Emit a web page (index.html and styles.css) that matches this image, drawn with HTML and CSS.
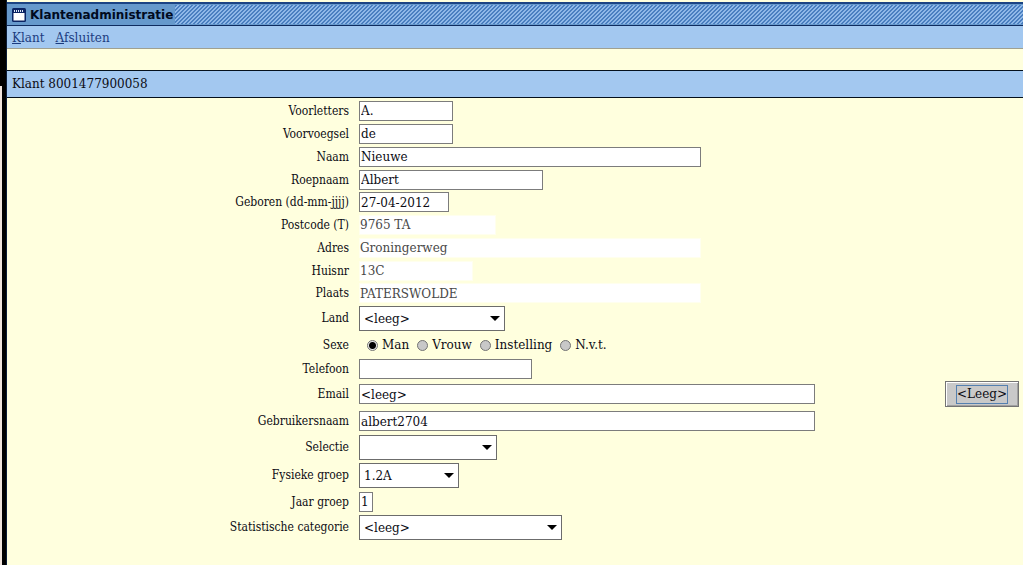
FILE: index.html
```html
<!DOCTYPE html>
<html lang="nl">
<head>
<meta charset="utf-8">
<title>Klantenadministratie</title>
<link rel="stylesheet" href="styles.css">
</head>
<body>
<div class="edge"></div>
<div class="window">
  <header class="titlebar">
    <div class="title">
      <svg class="title-icon" viewBox="0 0 14 14" width="14" height="14" aria-hidden="true">
        <rect width="14" height="14" rx="1.5" fill="#0b2464"/>
        <path d="M1.5 5h11v7.5h-11z" fill="#fff"/>
        <path d="M2 3h10" stroke="#dfe9fa" stroke-width="2" stroke-dasharray="1 1"/>
      </svg>
      <h1 class="title-text">Klantenadministratie</h1>
    </div>
    <div class="hatch"></div>
  </header>
  <nav class="menubar">
    <a class="menu-link" href="#klant"><span class="key">K</span>lant</a>
    <a class="menu-link" href="#afsluiten"><span class="key">A</span>fsluiten</a>
  </nav>
  <h2 class="record">Klant 8001477900058</h2>
  <form class="form">
    <label class="label" for="voorletters">Voorletters</label>
    <div class="field"><input class="text w-short" id="voorletters" type="text" value="A."></div>

    <label class="label" for="voorvoegsel">Voorvoegsel</label>
    <div class="field"><input class="text w-short" id="voorvoegsel" type="text" value="de"></div>

    <label class="label" for="naam">Naam</label>
    <div class="field"><input class="text w-long" id="naam" type="text" value="Nieuwe"></div>

    <label class="label" for="roepnaam">Roepnaam</label>
    <div class="field"><input class="text w-medium" id="roepnaam" type="text" value="Albert"></div>

    <label class="label" for="geboren">Geboren (dd-mm-jjjj)</label>
    <div class="field"><input class="text w-date" id="geboren" type="text" value="27-04-2012"></div>

    <label class="label" for="postcode">Postcode (T)</label>
    <div class="field"><input class="text readonly w-postcode" id="postcode" type="text" value="9765 TA" readonly></div>

    <label class="label" for="adres">Adres</label>
    <div class="field"><input class="text readonly w-long" id="adres" type="text" value="Groningerweg" readonly></div>

    <label class="label" for="huisnr">Huisnr</label>
    <div class="field"><input class="text readonly w-number" id="huisnr" type="text" value="13C" readonly></div>

    <label class="label" for="plaats">Plaats</label>
    <div class="field"><input class="text readonly w-long" id="plaats" type="text" value="PATERSWOLDE" readonly></div>

    <label class="label" for="land">Land</label>
    <div class="field"><span class="select-box w-land"><select class="select" id="land"><option>&lt;leeg&gt;</option></select></span></div>

    <span class="label" id="sexe">Sexe</span>
    <div class="field radios" role="radiogroup" aria-labelledby="sexe">
      <label class="radio"><input class="dot" type="radio" name="sexe" checked>Man</label>
      <label class="radio"><input class="dot" type="radio" name="sexe">Vrouw</label>
      <label class="radio"><input class="dot" type="radio" name="sexe">Instelling</label>
      <label class="radio"><input class="dot" type="radio" name="sexe">N.v.t.</label>
    </div>

    <label class="label" for="telefoon">Telefoon</label>
    <div class="field"><input class="text w-phone" id="telefoon" type="text"></div>

    <label class="label" for="email">Email</label>
    <div class="field">
      <input class="text w-wide" id="email" type="text" value="&lt;leeg&gt;">
      <button class="button" type="button"><span class="button-text">&lt;Leeg&gt;</span></button>
    </div>

    <label class="label" for="gebruikersnaam">Gebruikersnaam</label>
    <div class="field"><input class="text w-wide" id="gebruikersnaam" type="text" value="albert2704"></div>

    <label class="label" for="selectie">Selectie</label>
    <div class="field"><span class="select-box w-selectie"><select class="select" id="selectie"><option></option></select></span></div>

    <label class="label" for="groep">Fysieke groep</label>
    <div class="field"><span class="select-box w-groep"><select class="select" id="groep"><option>1.2A</option></select></span></div>

    <label class="label" for="jaar">Jaar groep</label>
    <div class="field"><input class="text w-digit" id="jaar" type="text" value="1"></div>

    <label class="label" for="categorie">Statistische categorie</label>
    <div class="field"><span class="select-box w-categorie"><select class="select" id="categorie"><option>&lt;leeg&gt;</option></select></span></div>
  </form>
</div>
</body>
</html>
```
FILE: styles.css
```css
* {
  box-sizing: border-box;
}

body {
  margin: 0;
  min-height: 100vh;
  display: flex;
  background: #ffffde;
  color: #0c0c14;
  font: 12px/16px "DejaVu Serif", serif;
}

.edge {
  flex: none;
  width: 7px;
  border-right: 1px solid #0b1c38;
  background: linear-gradient(#f0e4dc, #f0e4dc) 0 86px / 2px 100% no-repeat #000;
}

.window {
  flex: 1;
  min-width: 0;
  padding-top: 2px;
}

.titlebar {
  display: flex;
  height: 24px;
  border-top: 2px solid #1c4484;
  border-bottom: 1px solid #0f2c60;
  background: #6699cc;
}

.title {
  display: flex;
  align-items: center;
  gap: 4px;
  padding: 0 2px 0 5px;
}

.title-icon {
  flex: none;
}

.title-text {
  margin: 0;
  color: #000a20;
  font: bold 12px/16px "DejaVu Sans", sans-serif;
}

.hatch {
  flex: 1;
  margin: 1px 0;
  background: linear-gradient(135deg, #4a7fc0 0 25%, #8fb8e8 25% 50%, #4a7fc0 50% 75%, #8fb8e8 75%) 0 0 / 4px 4px;
}

.menubar {
  display: flex;
  gap: 11px;
  height: 23px;
  padding: 4px 5px;
  border-bottom: 1px solid #a0a090;
  background: #a3c8f0;
}

.menu-link {
  color: #1c3c80;
  text-decoration: none;
}

.key {
  text-decoration: underline;
}

.record {
  margin: 21px 0 1px;
  padding: 6px 5px 5px;
  border: solid #04101c;
  border-width: 1px 0;
  background: #a3c8f0;
  font: 12px/15px "DejaVu Serif", serif;
}

.form {
  display: grid;
  grid-template-columns: 342px 1fr;
  grid-template-rows: repeat(4, 23px) 22px repeat(3, 23px) 22px 28px 26px 22px 28px 26px 26px 30px 23px 28px;
  column-gap: 10px;
  align-items: center;
}

.label {
  font: 12px/16px "DejaVu Serif Condensed", "DejaVu Serif", serif;
  text-align: right;
}

.field {
  display: flex;
  align-items: center;
  justify-content: space-between;
  padding-right: 4px;
}

.text {
  height: 20px;
  padding: 1px 0 0 1px;
  border: 1px solid #7c7c7c;
  border-radius: 0;
  background: #fff;
  color: inherit;
  font: inherit;
}

.readonly {
  border-color: #ffffee;
  padding-left: 0;
  color: #484848;
}

.select-box {
  position: relative;
}

.select-box::after {
  content: "";
  position: absolute;
  top: 10px;
  right: 5px;
  border: solid transparent;
  border-width: 5px 5px 0;
  border-top-color: #000;
  pointer-events: none;
}

.select {
  display: block;
  width: 100%;
  height: 25px;
  padding: 2px 0 0 4px;
  appearance: none;
  border: 1px solid #6c6c6c;
  border-radius: 0;
  background: #fff;
  color: inherit;
  font: inherit;
}

.w-digit { width: 14px; }
.w-date { width: 90px; }
.w-short { width: 94px; }
.w-groep { width: 100px; }
.w-number { width: 114px; }
.w-postcode { width: 137px; }
.w-selectie { width: 138px; }
.w-land { width: 146px; }
.w-phone { width: 173px; }
.w-medium { width: 184px; }
.w-categorie { width: 203px; }
.w-long { width: 342px; }
.w-wide { width: 456px; }

.radios {
  justify-content: flex-start;
  gap: 8px;
  padding-left: 8px;
}

.radio {
  display: flex;
  align-items: center;
  gap: 4px;
}

.dot {
  width: 11px;
  height: 11px;
  margin: 0;
  appearance: none;
  border: 1px solid #747474;
  border-radius: 50%;
  background: #c8c8c8;
}

.dot:checked {
  background: radial-gradient(circle, #000 0 3px, #e8e8e8 4px);
}

.button {
  height: 26px;
  padding: 0 10px;
  border: 1px solid #747474;
  border-radius: 0;
  outline: 0;
  background: #c9c9c9;
  box-shadow: inset 1px 1px #fff, inset -1px -1px #a0a0a0;
  color: inherit;
  font: inherit;
}

.button-text {
  display: block;
  border: 1px solid #5480b0;
  line-height: 17px;
}
```
